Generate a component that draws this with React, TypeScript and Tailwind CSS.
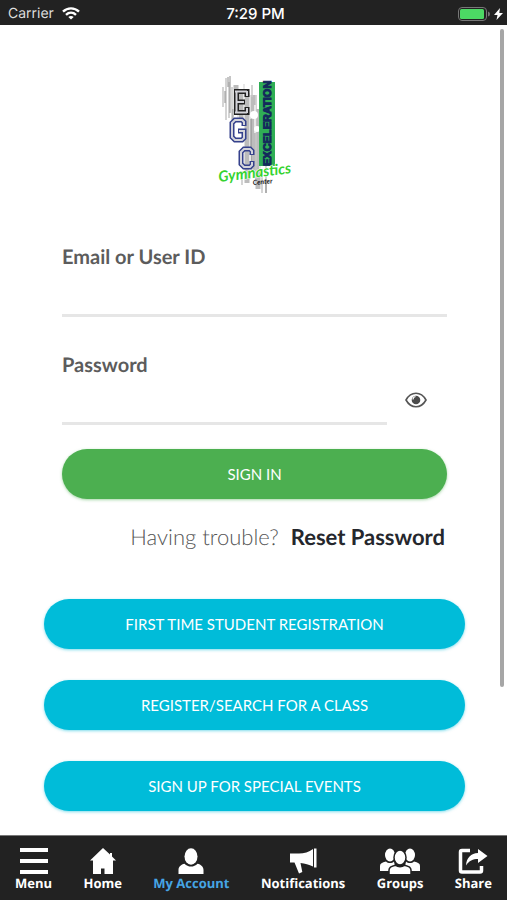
import { useState } from 'react';

const tabs = [
  { label: 'Menu', icon: MenuIcon },
  { label: 'Home', icon: HomeIcon },
  { label: 'My Account', icon: AccountIcon, active: true },
  { label: 'Notifications', icon: MegaphoneIcon },
  { label: 'Groups', icon: GroupsIcon },
  { label: 'Share', icon: ShareIcon },
];

const actions = ['FIRST TIME STUDENT REGISTRATION', 'REGISTER/SEARCH FOR A CLASS', 'SIGN UP FOR SPECIAL EVENTS'];

function MenuIcon() {
  return (
    <svg width="30" height="26" viewBox="0 0 30 26" fill="currentColor" aria-hidden="true">
      <path d="M1 0h28v4H1zM1 11h28v4H1zM1 22h28v4H1z" />
    </svg>
  );
}

function HomeIcon() {
  return (
    <svg width="26" height="26" viewBox="0 0 26 26" fill="currentColor" aria-hidden="true">
      <path d="M13 0 0 12.500h3V26h8v-5.500h3.500V26H23V12.500h3l-4-4V5h-2v1.500z" />
    </svg>
  );
}

function AccountIcon() {
  return (
    <svg width="26" height="26" viewBox="0 0 26 26" fill="currentColor" aria-hidden="true">
      <ellipse cx="13" cy="8.500" rx="6.500" ry="8.300" />
      <path d="M0.500 26v-4c0-3.500 2.500-5.500 6-6.300 1.800 1.900 4 2.800 6.500 2.800s4.700-.9 6.500-2.800c3.500.8 6 2.800 6 6.300v4z" />
    </svg>
  );
}

function MegaphoneIcon() {
  return (
    <svg width="28" height="26" viewBox="0 0 28 26" fill="currentColor" aria-hidden="true">
      <path d="M1 5.500h9C15 5.500 20 4 24 1v17.500c-4-2-8-3-12.500-3.500l1.800 9-3.300 1.500L5.500 14.500H1z" />
      <path d="M25 .5h2.500v19H25z" />
    </svg>
  );
}

function GroupsIcon() {
  return (
    <svg width="40" height="26" viewBox="0 0 40 26" fill="currentColor" aria-hidden="true">
      <ellipse cx="10" cy="7" rx="5" ry="6.500" />
      <ellipse cx="30" cy="7" rx="5" ry="6.500" />
      <path d="M0 23v-5c0-2.500 2-3.600 6-4.500 2 2 6 2 8 0l2 9.500zM40 23v-5c0-2.500-2-3.600-6-4.500-2 2-6 2-8 0l-2 9.500z" />
      <g stroke="#222222" strokeWidth="1.500">
        <path d="M9 27v-5c0-3 2.500-4 6.500-4.800 2.500 2 6.500 2 9 0C28.500 18 31 19 31 22v5z" />
        <ellipse cx="20" cy="9.500" rx="6" ry="7.500" />
      </g>
    </svg>
  );
}

function ShareIcon() {
  return (
    <svg width="30" height="26" viewBox="0 0 30 26" aria-hidden="true">
      <path d="M12 2.500H4q-1.500 0-1.500 1.500v18.500q0 1.500 1.500 1.500h18q1.500 0 1.500-1.500V18" fill="none" stroke="currentColor" strokeWidth="3.500" />
      <path d="M20 1l9.500 7-9.500 7v-4c-5 0-9 1.500-12 6.500.5-8 5-12 12-12.500z" fill="currentColor" />
    </svg>
  );
}

function EyeIcon() {
  return (
    <svg width="22" height="16" viewBox="0 0 22 16" fill="none" aria-hidden="true">
      <path d="M1 8C6-1 16-1 21 8 16 17 6 17 1 8z" stroke="#555555" strokeWidth="1.600" />
      <circle cx="11" cy="8" r="4.300" fill="#4a4a4a" />
      <path d="M8 7.500C8 6 9 4.800 10.500 4.500" stroke="#ffffff" strokeWidth="1.200" />
    </svg>
  );
}

function Logo() {
  return (
    <svg width="100" height="150" viewBox="0 0 100 150" role="img" aria-label="EGC Exceleration Gymnastics Center">
      {/* Brush strokes */}
      <g fill="none">
        <path d="M31 20v24M36 26v31M42 28v90M48 30v76M53 44v80" stroke="#bcbcbc" strokeWidth="5" />
        <path d="M18 22v20M21 13v42M24 17v36M27 22v38M47 20v12M51 30v88M61 98v30M57 104v24M37 106v14" stroke="#c6c6c6" strokeWidth="1.500" />
        <path d="M23 12v10M25 11v37M28 44v18M46 54v54M20 26v12M61 114v14" stroke="#8c8c8c" strokeWidth="1" />
        <path d="M33 28v26M39 19v16M55 64v40M50 40v28M45 84v30" stroke="#e8e8e8" strokeWidth="2" />
      </g>
      <circle cx="49" cy="50" r="4" fill="#ffffff" />
      <circle cx="52" cy="64" r="3" fill="#ffffff" />

      {/* Block letters */}
      <g fill="none">
        <g strokeWidth="5">
          <path d="M29 26.500h14.500M31.500 26v22M29 47.500h14.500M32 37h8M42 24v8M42 42v8" stroke="#222222" />
          <path d="M39 61v-4l-2-2h-7l-3 3v14l3 3h7l2-2v-7h-6" stroke="#35418c" />
          <path d="M47 90v-4l-2-2h-6l-3 3v12l3 3h6l2-2v-4" stroke="#35418c" />
        </g>
        <g stroke="#d4d4da" strokeWidth="2">
          <path d="M30 26.500h12M31.500 26v22M30 47.500h12M32 37h7M42 26v5M42 43v5" />
          <path d="M39 60v-3l-2-2h-7l-3 3v14l3 3h7l2-2v-7h-5" />
          <path d="M47 89v-3l-2-2h-6l-3 3v12l3 3h6l2-2v-3" />
        </g>
      </g>

      <rect x="54" y="17" width="16" height="84" fill="#2fae55" />
      <text
        transform="translate(66 101) rotate(-90)"
        className="font-['Liberation_Sans',sans-serif] text-[11px] font-bold [text-rendering:geometricPrecision]"
        fill="#14295c"
        stroke="#14295c"
        strokeWidth="1"
      >
        EXCELERATION
      </text>
      <text
        transform="translate(14 117) rotate(-7)"
        className="font-['Lato',sans-serif] text-[15px] font-bold italic [text-rendering:geometricPrecision]"
        fill="#35d32f"
        stroke="#ffffff"
        strokeWidth="1"
        paintOrder="stroke"
      >
        Gymnastics
      </text>
      <text transform="translate(48 120) rotate(-5)" className="font-['Lato',sans-serif] text-[7px] font-bold italic" fill="#222222">
        Center
      </text>
    </svg>
  );
}

function StatusBar() {
  return (
    <header className="grid h-[25px] shrink-0 grid-cols-3 items-center bg-[#222222] pl-2 pr-1 pt-[2px] font-['Inter',sans-serif] text-[14px] leading-5 text-white [text-rendering:geometricPrecision]">
      <div className="flex items-center gap-2 text-[#dddddd]">
        <span>Carrier</span>
        <svg width="18" height="13" viewBox="0 0 18 13" fill="none" stroke="#ffffff" strokeWidth="2.400" aria-hidden="true">
          <path d="M1 4.600c4.500-4.300 11.500-4.300 16 0M4 7.800c2.900-2.700 7.100-2.700 10 0" />
          <path d="M9 12.500 6.300 9.900c1.600-1.300 3.800-1.300 5.400 0z" fill="#ffffff" stroke="none" />
        </svg>
      </div>
      <span className="text-center text-[15px] font-medium">7:29 PM</span>
      <div className="flex items-center justify-end gap-1">
        <svg width="32" height="14" viewBox="0 0 32 14" aria-hidden="true">
          <rect x="0.500" y="0.500" width="28" height="13" rx="3.500" fill="none" stroke="#777777" />
          <rect x="2" y="2" width="24" height="10" rx="1.500" fill="#4cd964" />
          <path d="M30 4.500q2 .5 2 2.500t-2 2.500z" fill="#777777" />
        </svg>
        <svg width="9" height="12" viewBox="0 0 9 12" fill="#ffffff" aria-hidden="true">
          <path d="M6 0 0 7h3.500L2.500 12 9 5H5.300z" />
        </svg>
      </div>
    </header>
  );
}

export default function App() {
  const [showPassword, setShowPassword] = useState(false);

  return (
    <div className="flex min-h-screen flex-col bg-white font-['Lato',sans-serif]">
      <StatusBar />

      <main className="relative flex-1 pb-6 pl-11 pr-[42px] pt-10 [text-rendering:geometricPrecision]">
        <div className="flex justify-center">
          <Logo />
        </div>

        <form className="px-[18px] pt-7" onSubmit={(e) => e.preventDefault()}>
          <label htmlFor="user" className="block text-[20px] font-bold leading-7 text-[#5c5c5c]">
            Email or User ID
          </label>
          <input id="user" type="text" className="block h-[46px] w-full border-b-[3px] border-[#e6e6e6] text-[20px] outline-none" />

          <label htmlFor="password" className="mt-[34px] block text-[20px] font-bold leading-7 text-[#5c5c5c]">
            Password
          </label>
          <div className="flex items-center pr-5">
            <input
              id="password"
              type={showPassword ? 'text' : 'password'}
              className="block h-[46px] min-w-0 flex-1 border-b-[3px] border-[#e6e6e6] text-[20px] outline-none"
            />
            <button type="button" aria-label="Show password" className="pb-1 pl-[18px]" onClick={() => setShowPassword(!showPassword)}>
              <EyeIcon />
            </button>
          </div>

          <button type="submit" className="mt-6 h-[50px] w-full rounded-full bg-[#4caf50] text-[15px] text-white shadow-[0_1px_3px_#4caf5080]">
            SIGN IN
          </button>

          <p className="mt-[22px] flex items-center justify-end gap-3 pr-[2px] text-[22px] leading-8">
            <span className="font-light text-[#555555]">Having trouble?</span>
            <a href="#reset" className="font-bold text-[#25272d]">
              Reset Password
            </a>
          </p>
        </form>

        {/* Registration links */}
        <div className="flex flex-col gap-[31px] pt-[46px]">
          {actions.map((label) => (
            <button key={label} type="button" className="h-[50px] w-full rounded-full bg-[#00bcd9] text-[15px] text-white shadow-[0_1px_3px_#00bcd980]">
              {label}
            </button>
          ))}
        </div>

        {/* Scroll indicator */}
        <div className="absolute right-[3px] top-1 h-[658px] w-1 rounded-full bg-[#a6a6a6]" />
      </main>

      <nav className="flex h-[65px] shrink-0 justify-between border-t border-[#777777] bg-[#222222] px-[15px] pt-3 font-['Open_Sans',sans-serif] text-[13px] font-bold leading-[18px] text-white [text-rendering:geometricPrecision]">
        {tabs.map((tab) => (
          <a key={tab.label} href="#" className="flex flex-col items-center">
            <tab.icon />
            <span className={tab.active ? 'text-[#46a5e5]' : 'text-white'}>{tab.label}</span>
          </a>
        ))}
      </nav>
    </div>
  );
}
